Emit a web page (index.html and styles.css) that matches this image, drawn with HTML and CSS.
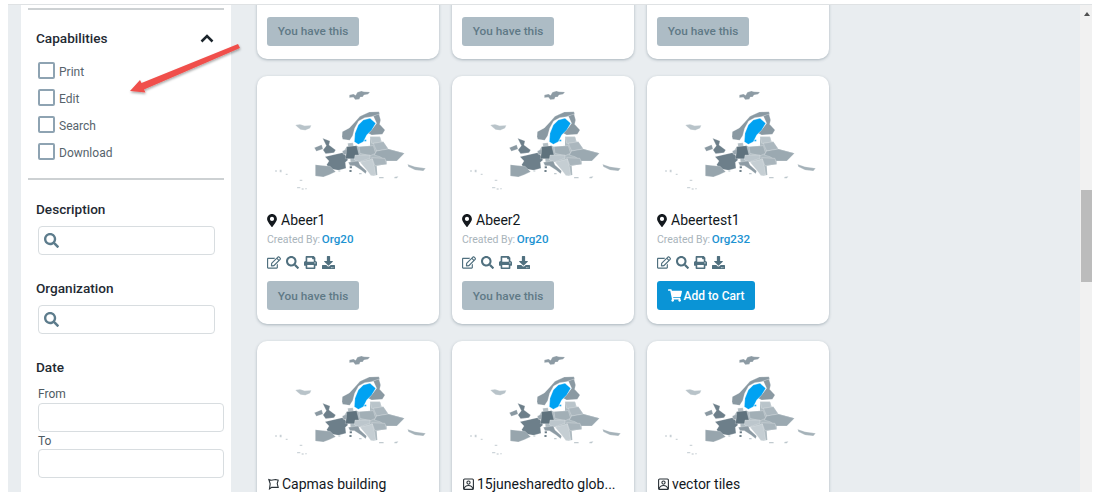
FILE: index.html
```html
<!DOCTYPE html>
<html lang="en">
<head>
<meta charset="utf-8">
<title>Catalog</title>
<link rel="stylesheet" href="styles.css">
</head>
<body>
<svg class="defs" width="0" height="0" aria-hidden="true">
  <defs>
    <filter id="soft" x="-5%" y="-5%" width="110%" height="110%"><feGaussianBlur stdDeviation="1.200"/></filter>
  </defs>
  <symbol id="map" viewBox="6 3 546 390">
    <g filter="url(#soft)" stroke="#fff" stroke-width=".7" stroke-linejoin="round">
      <path fill="#aebac0" stroke="none" d="M262 235l13-20 30-3 7 3 33-3 0-27 30 0 5 15 5 0 15 22 48 13-23 23-30 0 0 10-30 4 2 28-14 2-13-17-20-25-25 4-8 0-2-25z"/>
      <path fill="#8d9ba4" d="M283 60l12-3 7 4 5-9 12-4 8 2 18 1-6 7-12 2-4 6-7 0-3 7-12 1-6-7-12 1z"/>
      <path fill="#b8c3c9" d="M121 150l14-2 14 4 20-1-4 9-14 6-14-2-10-8z"/>
      <path fill="#8a99a2" d="M262 170l21-11 14-15 18-20 28-13 29-1 2 8-25 7-20 3-18 10-12 22-6 22-9 14-21-3-2-8z"/>
      <path fill="#8a99a2" d="M355 123l17-6 5 18-3 13 16 17-8 13-32 2-10-5 15-17 10-13z"/>
      <path fill="#00a2f2" d="M345 130l17 15-12 20-15 15-10 20-15 8-12-8 2-25 10-25 15-15z"/>
      <path fill="#00a2f2" d="M328 194h6v5h-6z"/>
      <path fill="#b2bdc3" d="M278 205l16-2 2 12-16 3z"/>
      <path fill="#6d7f8a" d="M203 190l22 8-3 12 20 15-5 8-25 3-8-11 10-13z"/>
      <path fill="#8a99a2" d="M178 218l22-9 4 13-20 7z"/>
      <path fill="#6d7f8a" d="M210 245l52-12 9 6 8 16-8 7 2 18-22 6-18-3-4 8-14-22 7-11z"/>
      <path fill="#9aa7af" d="M262 228l16-6 0 18-13-2z"/>
      <path fill="#5f727d" d="M275 215l30-3 7 28-12 11-29 0 3-16z"/>
      <path fill="#97a5ad" d="M181 269l44 5 17 16-19 9-18 7-24-3z"/>
      <path fill="#a2afb6" d="M312 215l43-3 7 23-17 7-30-7z"/>
      <path fill="#b9c4ca" d="M345 185l30 0 5 20-30 0z"/>
      <path fill="#abb7be" d="M355 205l30-5 15 22-35 6z"/>
      <path fill="#9ba9b1" d="M365 228l35-6 48 13-23 23-30 0-20-13-17-5z"/>
      <path fill="#bcc6cc" d="M300 240l45 0 0 10-35 12-12-8z"/>
      <path fill="#a9b5bc" d="M350 248l40 2 5 18-35 4z"/>
      <path fill="#8d9ba4" d="M280 262l30-4 5 12 20 18-3 8-14-11-20-13-13 0z"/>
      <path fill="#c5ced3" d="M315 262l37-10 6 23 4 25-14 2-13-17z"/>
      <path fill="#5f727d" d="M284 274h7v6h-7zM283 285h7v6h-7z"/>
      <path fill="#b7c2c8" d="M372 306h14v4h-14zM418 306l12-2-4 6-8 0zM312 294h8v4h-8z"/>
      <path fill="#a5b2b9" d="M458 268l22 7 32 5-7 8-25-3-20-10z"/>
      <path fill="#c5ced3" d="M60 286h6v4h-6zM74 284h6v8h-6zM92 296h6v4h-6zM134 314h8v4h-8zM126 336h10v4h-10zM140 340h6v4h-6zM150 340h6v3h-6zM250 286h6v4h-6z"/>
    </g>
  </symbol>
  <symbol id="i-marker" viewBox="0 0 384 512"><path d="M172.268 501.67C26.97 291.031 0 262.774 0 192 0 85.961 85.961 0 192 0s192 85.961 192 192c0 70.774-26.97 99.031-172.268 309.67-9.535 13.774-29.93 13.773-39.464 0zM192 272c44.183 0 80-35.817 80-80s-35.817-80-80-80-80 35.817-80 80 35.817 80 80 80z"/></symbol>
  <symbol id="i-search" viewBox="0 0 512 512"><path d="M505 442.7L405.3 343c-4.5-4.5-10.6-7-17-7H372c27.6-35.3 44-79.7 44-128C416 93.1 322.9 0 208 0S0 93.1 0 208s93.1 208 208 208c48.3 0 92.7-16.4 128-44v16.3c0 6.4 2.5 12.5 7 17l99.7 99.7c9.4 9.4 24.6 9.4 33.9 0l28.3-28.3c9.4-9.4 9.4-24.6.1-34zM208 336c-70.7 0-128-57.2-128-128 0-70.7 57.2-128 128-128 70.7 0 128 57.2 128 128 0 70.7-57.2 128-128 128z"/></symbol>
  <symbol id="i-edit" viewBox="0 0 576 512"><path d="M402.3 344.9l32-32c5-5 13.7-1.5 13.7 5.7V464c0 26.5-21.5 48-48 48H48c-26.5 0-48-21.5-48-48V112c0-26.5 21.5-48 48-48h273.5c7.1 0 10.7 8.6 5.7 13.7l-32 32c-1.5 1.5-3.5 2.3-5.7 2.3H48v352h352V350.5c0-2.1.8-4.1 2.3-5.6zm156.6-201.8L296.3 405.7l-90.4 10c-26.2 2.9-48.5-19.2-45.6-45.6l10-90.4L432.9 17.1c22.9-22.9 59.9-22.9 82.7 0l43.2 43.2c22.9 22.9 22.9 60 .1 82.8zM460.1 174L402 115.9 216.2 301.8l-7.3 65.3 65.3-7.3L460.1 174zm64.8-79.7l-43.2-43.2c-4.1-4.1-10.8-4.1-14.8 0L436 82l58.1 58.1 30.9-30.9c4-4.2 4-10.8-.1-14.9z"/></symbol>
  <symbol id="i-print" viewBox="0 0 512 512"><path d="M448 192V77.25c0-8.49-3.37-16.62-9.37-22.63L393.37 9.37c-6-6-14.14-9.37-22.63-9.37H96C78.33 0 64 14.33 64 32v160c-35.35 0-64 28.65-64 64v112c0 8.84 7.16 16 16 16h48v96c0 17.67 14.33 32 32 32h320c17.67 0 32-14.33 32-32v-96h48c8.84 0 16-7.16 16-16V256c0-35.35-28.65-64-64-64zm-64 256H128v-96h256v96zm0-224H128V64h192v48c0 8.84 7.16 16 16 16h48v96zm48 72c-13.25 0-24-10.75-24-24 0-13.26 10.75-24 24-24s24 10.74 24 24c0 13.25-10.75 24-24 24z"/></symbol>
  <symbol id="i-download" viewBox="0 0 512 512"><path d="M216 0h80c13.3 0 24 10.7 24 24v168h87.7c17.8 0 26.7 21.5 14.1 34.1L269.7 378.3c-7.5 7.5-19.8 7.5-27.3 0L90.1 226.1c-12.6-12.6-3.7-34.1 14.1-34.1H192V24c0-13.3 10.7-24 24-24zm296 376v112c0 13.3-10.7 24-24 24H24c-13.3 0-24-10.7-24-24V376c0-13.3 10.7-24 24-24h146.7l49 49c20.1 20.1 52.5 20.1 72.6 0l49-49H488c13.3 0 24 10.7 24 24zm-124 88c0-11-9-20-20-20s-20 9-20 20 9 20 20 20 20-9 20-20zm64 0c0-11-9-20-20-20s-20 9-20 20 9 20 20 20 20-9 20-20z"/></symbol>
  <symbol id="i-cart" viewBox="0 0 576 512"><path d="M528.12 301.319l47.273-208C578.806 78.301 567.391 64 551.99 64H159.208l-9.166-44.81C147.758 8.021 137.93 0 126.529 0H24C10.745 0 0 10.745 0 24v16c0 13.255 10.745 24 24 24h69.883l70.248 343.435C147.325 417.1 136 435.222 136 456c0 30.928 25.072 56 56 56s56-25.072 56-56c0-15.674-6.447-29.835-16.824-40h209.647C430.447 426.165 424 440.326 424 456c0 30.928 25.072 56 56 56s56-25.072 56-56c0-22.172-12.888-41.332-31.579-50.405l5.517-24.276c3.413-15.018-8.002-29.319-23.403-29.319H218.117l-6.545-32h293.145c11.206 0 20.92-7.754 23.403-18.681z"/></symbol>
  <symbol id="i-polygon" viewBox="0 0 11 12"><path fill="none" stroke="#2a3238" stroke-width="1.100" d="M.8 1.500l2.500.7 4.200-.7 2.700.7-1 3.400 1 3.800-3-.2-3.500.2-2.200 1.500.7-5z"/></symbol>
  <symbol id="i-image" viewBox="0 0 11 12"><g fill="none" stroke="#2a3238" stroke-width="1.100"><rect x=".6" y="1" width="9.800" height="10.400" rx="1"/><circle cx="5.500" cy="4.600" r="1.600"/><path d="M1 11c.8-3 2.500-3.500 4.500-3.500s3.700.5 4.500 3.500"/></g></symbol>
</svg>

<div class="frame">
  <aside class="sidebar">
    <section class="group group-caps">
      <header class="caps-head">
        <h3 class="heading">Capabilities</h3>
        <svg class="chevron" viewBox="0 0 14 9"><path d="M1.500 7.500L7 2l5.500 5.500"/></svg>
      </header>
      <ul class="checks">
        <li class="check"><span class="box"></span>Print</li>
        <li class="check"><span class="box"></span>Edit</li>
        <li class="check"><span class="box"></span>Search</li>
        <li class="check"><span class="box"></span>Download</li>
      </ul>
    </section>
    <section class="group group-search">
      <h3 class="heading">Description</h3>
      <div class="field"><svg class="field-icon"><use href="#i-search"/></svg></div>
    </section>
    <section class="group group-search">
      <h3 class="heading">Organization</h3>
      <div class="field"><svg class="field-icon"><use href="#i-search"/></svg></div>
    </section>
    <section class="group group-date">
      <h3 class="heading">Date</h3>
      <label class="date-label">From</label>
      <div class="field field-wide"></div>
      <label class="date-label date-label-to">To</label>
      <div class="field field-wide"></div>
    </section>
  </aside>

  <main class="content">
    <div class="grid">
      <article class="card">
        <svg class="map"><use href="#map"/></svg>
        <h4 class="title"><svg class="type-icon"><use href="#i-marker"/></svg>Abeer</h4>
        <p class="by">Created By: <a class="org">Org20</a></p>
        <div class="tools"><svg class="tool tool-edit"><use href="#i-edit"/></svg><svg class="tool"><use href="#i-search"/></svg><svg class="tool"><use href="#i-print"/></svg><svg class="tool"><use href="#i-download"/></svg></div>
        <span class="btn btn-owned">You have this</span>
      </article>
      <article class="card">
        <svg class="map"><use href="#map"/></svg>
        <h4 class="title"><svg class="type-icon"><use href="#i-marker"/></svg>Abeer</h4>
        <p class="by">Created By: <a class="org">Org20</a></p>
        <div class="tools"><svg class="tool tool-edit"><use href="#i-edit"/></svg><svg class="tool"><use href="#i-search"/></svg><svg class="tool"><use href="#i-print"/></svg><svg class="tool"><use href="#i-download"/></svg></div>
        <span class="btn btn-owned">You have this</span>
      </article>
      <article class="card">
        <svg class="map"><use href="#map"/></svg>
        <h4 class="title"><svg class="type-icon"><use href="#i-marker"/></svg>Abeer</h4>
        <p class="by">Created By: <a class="org">Org20</a></p>
        <div class="tools"><svg class="tool tool-edit"><use href="#i-edit"/></svg><svg class="tool"><use href="#i-search"/></svg><svg class="tool"><use href="#i-print"/></svg><svg class="tool"><use href="#i-download"/></svg></div>
        <span class="btn btn-owned">You have this</span>
      </article>

      <article class="card">
        <svg class="map"><use href="#map"/></svg>
        <h4 class="title"><svg class="type-icon"><use href="#i-marker"/></svg>Abeer1</h4>
        <p class="by">Created By: <a class="org">Org20</a></p>
        <div class="tools"><svg class="tool tool-edit"><use href="#i-edit"/></svg><svg class="tool"><use href="#i-search"/></svg><svg class="tool"><use href="#i-print"/></svg><svg class="tool"><use href="#i-download"/></svg></div>
        <span class="btn btn-owned">You have this</span>
      </article>
      <article class="card">
        <svg class="map"><use href="#map"/></svg>
        <h4 class="title"><svg class="type-icon"><use href="#i-marker"/></svg>Abeer2</h4>
        <p class="by">Created By: <a class="org">Org20</a></p>
        <div class="tools"><svg class="tool tool-edit"><use href="#i-edit"/></svg><svg class="tool"><use href="#i-search"/></svg><svg class="tool"><use href="#i-print"/></svg><svg class="tool"><use href="#i-download"/></svg></div>
        <span class="btn btn-owned">You have this</span>
      </article>
      <article class="card">
        <svg class="map"><use href="#map"/></svg>
        <h4 class="title"><svg class="type-icon"><use href="#i-marker"/></svg>Abeertest1</h4>
        <p class="by">Created By: <a class="org">Org232</a></p>
        <div class="tools"><svg class="tool tool-edit"><use href="#i-edit"/></svg><svg class="tool"><use href="#i-search"/></svg><svg class="tool"><use href="#i-print"/></svg><svg class="tool"><use href="#i-download"/></svg></div>
        <span class="btn btn-cart"><svg class="cart-icon"><use href="#i-cart"/></svg>Add to Cart</span>
      </article>

      <article class="card">
        <svg class="map"><use href="#map"/></svg>
        <h4 class="title title-line"><svg class="type-icon"><use href="#i-polygon"/></svg>Capmas building</h4>
      </article>
      <article class="card">
        <svg class="map"><use href="#map"/></svg>
        <h4 class="title title-line"><svg class="type-icon"><use href="#i-image"/></svg>15junesharedto glob...</h4>
      </article>
      <article class="card">
        <svg class="map"><use href="#map"/></svg>
        <h4 class="title title-line"><svg class="type-icon"><use href="#i-image"/></svg>vector tiles</h4>
      </article>
    </div>
  </main>

  <div class="scrollbar">
    <span class="scroll-up"></span>
    <span class="scroll-thumb"></span>
  </div>

  <svg class="annotation" viewBox="0 0 120 60">
    <defs><filter id="arrow-shadow" x="-10%" y="-20%" width="120%" height="150%"><feDropShadow dx="0.500" dy="1.500" stdDeviation="1" flood-color="#000" flood-opacity=".35"/></filter></defs>
    <g filter="url(#arrow-shadow)" fill="#f0504c">
      <path d="M111 6L113 10 17 51.500 18.500 54.500 3 53 13 42 14.500 45z" />
    </g>
  </svg>
</div>
</body>
</html>
```
FILE: styles.css
```css
* { box-sizing: border-box; }

html, body {
  margin: 0;
  height: 100%;
  background: #fff;
  overflow: hidden;
}

body {
  font-family: Roboto, "Liberation Sans", sans-serif;
  color: #1d2730;
}

.defs { position: absolute; }

.frame {
  position: relative;
  display: flex;
  width: 1084px;
  height: 488px;
  margin: 4px 0 0 8px;
  padding-left: 13px;
  background: #e9edf0;
  border-top: 1px solid #dfe2e4;
  overflow: hidden;
}

/* Sidebar */
.sidebar {
  flex: 0 0 209px;
  padding: 3px 7px 0;
  background: #fff;
}

.group { padding: 0 0 0 8px; }

.group-caps {
  height: 172px;
  border-top: 2px solid #cdd1d3;
  border-bottom: 2px solid #cdd1d3;
}

.caps-head {
  display: flex;
  align-items: center;
  justify-content: space-between;
  height: 22px;
  margin-top: 17px;
  padding-right: 10px;
}

.heading {
  margin: 0;
  font-size: 13.600px;
  font-weight: 500;
  line-height: 22px;
  color: #1f2a33;
}

.chevron {
  width: 14px;
  height: 9px;
  fill: none;
  stroke: #1c252c;
  stroke-width: 2.500;
}

.checks {
  list-style: none;
  margin: 9px 0 0;
  padding: 0 0 0 2px;
}

.check {
  display: flex;
  align-items: center;
  gap: 4px;
  height: 27px;
  font-size: 12px;
  color: #56636c;
}

.box {
  width: 17px;
  height: 17px;
  margin-top: -3px;
  border: 2px solid #8ea3b2;
  border-radius: 2px;
  background: #fff;
}

.group-search { height: 79px; }
.group-caps + .group-search { margin-top: 18px; }

.field {
  display: flex;
  align-items: center;
  width: 177px;
  height: 29px;
  margin: 6px 0 0 2px;
  padding-left: 5px;
  border: 1px solid #d8dde0;
  border-radius: 4px;
  background: #fff;
}

.field-wide { width: 186px; margin-top: 0; }

.field-icon {
  width: 15px;
  height: 15px;
  fill: #5d7c8c;
}

.group-date .heading { margin-bottom: 9px; }

.date-label {
  display: block;
  margin: 0 0 1px 2px;
  font-size: 12px;
  line-height: 15px;
  color: #4f5b63;
}

.date-label-to { margin: 2px 0 0 2px; }

/* Results */
.content {
  flex: 0 0 849px;
  padding-left: 26px;
  overflow: hidden;
}

.grid {
  display: grid;
  grid-template-columns: repeat(3, 182px);
  grid-auto-rows: 247.500px;
  gap: 17px 13px;
  margin-top: -193.500px;
}

.card {
  display: flex;
  flex-direction: column;
  align-items: flex-start;
  padding: 0 10px;
  background: #fff;
  border-radius: 10px;
  box-shadow: 0 1px 3px rgba(90, 110, 125, .45);
}

.map {
  flex: none;
  width: 182px;
  height: 130px;
  margin: 0 -10px 5px;
}

.title {
  display: flex;
  align-items: center;
  gap: 4px;
  height: 18px;
  margin: 0;
  font-size: 14px;
  font-weight: 400;
  line-height: 18px;
  color: #12181d;
  white-space: nowrap;
}

.title-line { gap: 3px; margin-top: -1px; }

.type-icon {
  flex: none;
  width: 10px;
  height: 13px;
  fill: #14191e;
}

.title-line .type-icon {
  width: 11px;
  height: 12px;
  margin-left: 1px;
}

.by {
  margin: 3px 0 0;
  font-size: 10.500px;
  line-height: 15px;
  color: #a9b4bb;
}

.org {
  margin-left: -1px;
  font-size: 11.600px;
  font-weight: 500;
  color: #1d93d2;
}

.tools {
  display: flex;
  align-items: center;
  gap: 5px;
  height: 14px;
  margin-top: 8px;
}

.tool {
  width: 13px;
  height: 13px;
  fill: #50707f;
}

.tool-edit { width: 14px; }

.btn {
  display: flex;
  align-items: center;
  justify-content: center;
  height: 29px;
  margin-top: 12px;
  border-radius: 3px;
  font-size: 11.800px;
  font-weight: 500;
}

.btn-owned {
  width: 92px;
  background: #adbcc5;
  color: #5f7986;
}

.btn-cart {
  gap: 2px;
  width: 98px;
  background: #0a94d6;
  color: #fff;
  font-size: 12px;
}

.cart-icon {
  width: 14px;
  height: 13px;
  fill: #fff;
}

/* Scrollbar */
.scrollbar {
  position: relative;
  flex: 0 0 14px;
  background: #f1f1f1;
}

.scroll-up {
  position: absolute;
  top: 7px;
  left: 4px;
  border-left: 3.500px solid transparent;
  border-right: 3.500px solid transparent;
  border-bottom: 4px solid #505050;
}

.scroll-thumb {
  position: absolute;
  top: 185px;
  left: 1px;
  width: 12px;
  height: 92px;
  background: #bcbcbc;
}

/* Red annotation arrow */
.annotation {
  position: absolute;
  top: 33px;
  left: 119px;
  width: 120px;
  height: 60px;
}
```
